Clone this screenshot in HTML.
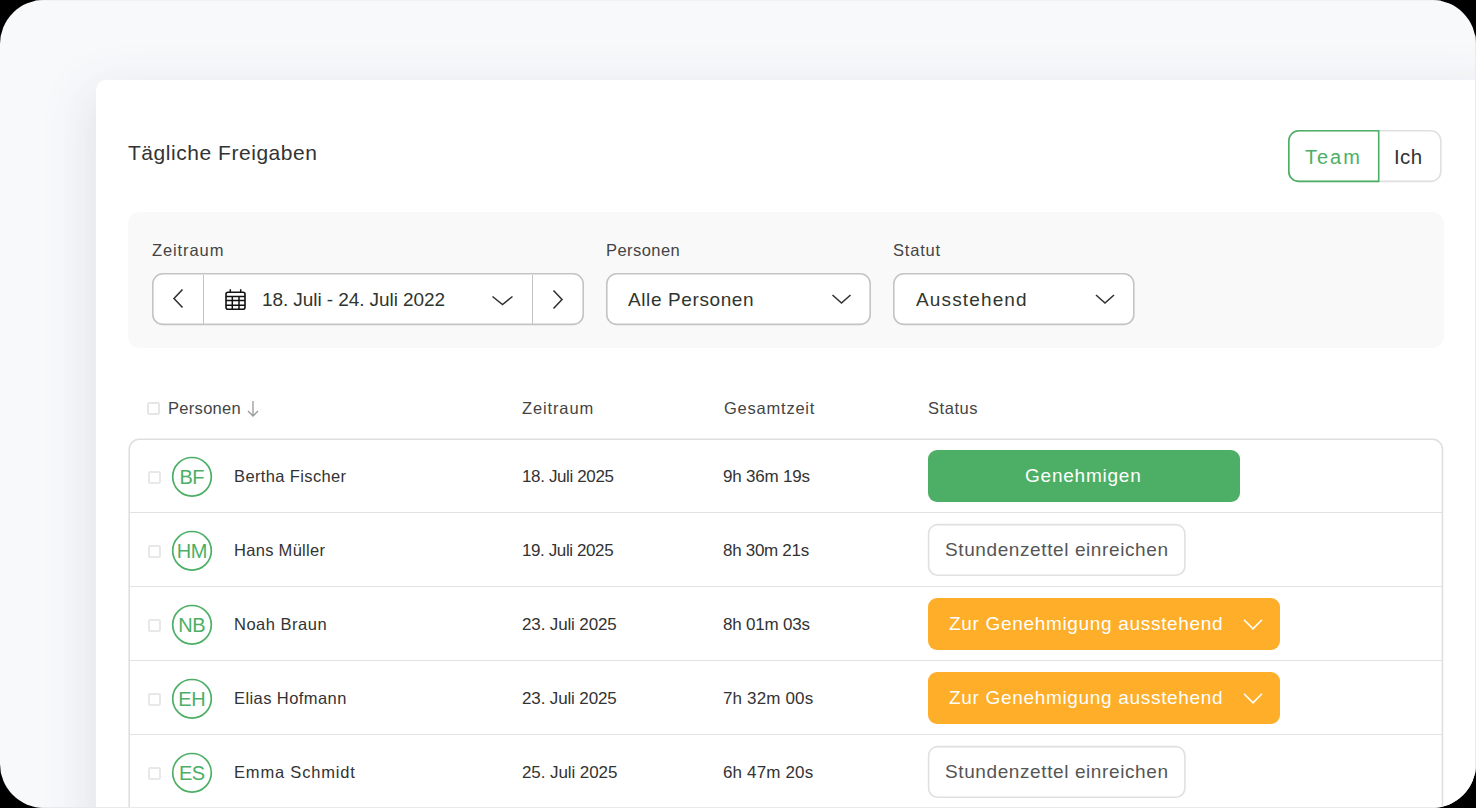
<!DOCTYPE html>
<html><head><meta charset="utf-8">
<style>
*{box-sizing:border-box;margin:0;padding:0}
html,body{width:1476px;height:808px;overflow:hidden;background:#000}
body{font-family:"Liberation Sans",sans-serif;position:relative}
.frame{position:absolute;left:0;top:0;width:1476px;height:808px;border-radius:44px;background:#f8f9fb;overflow:hidden}
.edge-t{position:absolute;left:0;top:0;width:1476px;height:1px;background:#f2f3f5}
.edge-r{position:absolute;right:0;top:0;width:1px;height:808px;background:#e9eaec}
.edge-b{position:absolute;left:0;bottom:0;width:1476px;height:1px;background:#e8e9eb}
.card{position:absolute;left:96px;top:80px;width:1420px;height:800px;background:#fff;border-radius:10px;box-shadow:-9px 8px 50px rgba(45,75,95,0.11)}
.t{position:absolute;white-space:nowrap;line-height:1}
.box{position:absolute}
svg{position:absolute;overflow:visible}
</style></head>
<body>
<div class="frame">
  <div class="card"></div>

  <!-- title -->
  <span class="t" style="left:128px;top:142.4px;font-size:21px;color:#333;letter-spacing:0.54px">Tägliche Freigaben</span>

  <!-- toggle -->
  <svg style="left:0;top:0" width="1" height="1">
    <rect x="1288.8" y="130.8" width="152" height="50.6" rx="10" fill="#fff" stroke="#e0e0e0" stroke-width="1.6"/>
    <path d="M1378.7 130.8 H1298.8 A10 10 0 0 0 1288.8 140.8 V171.4 A10 10 0 0 0 1298.8 181.4 H1378.7 Z" fill="none" stroke="#4caf65" stroke-width="1.6"/>
  </svg>
  <span class="t" style="left:1305px;top:147px;font-size:20px;color:#4caf65;letter-spacing:2px">Team</span>
  <span class="t" style="left:1394px;top:147px;font-size:20.5px;color:#333;letter-spacing:0.35px">Ich</span>

  <!-- filter panel -->
  <div class="box" style="left:128px;top:212px;width:1316px;height:136px;background:#f9f9f9;border-radius:12px"></div>
  <span class="t" style="left:152px;top:242px;font-size:16.5px;color:#444;letter-spacing:0.9px">Zeitraum</span>
  <span class="t" style="left:606px;top:242px;font-size:16.5px;color:#444;letter-spacing:0.45px">Personen</span>
  <span class="t" style="left:893px;top:242px;font-size:16.5px;color:#444;letter-spacing:0.8px">Statut</span>

  <!-- date control -->
  <svg style="left:0;top:0" width="1" height="1"><rect x="152.8" y="273.8" width="430.4" height="50.6" rx="10" fill="#fff" stroke="#c3c4c3" stroke-width="1.6"/></svg>
  <div class="box" style="left:202.7px;top:274.5px;width:1.6px;height:49.5px;background:#c3c4c3"></div>
  <div class="box" style="left:531.7px;top:274.5px;width:1.6px;height:49.5px;background:#c3c4c3"></div>
  <svg style="left:0;top:0" width="1" height="1"><path d="M182.5 289.5 L174 298.5 L182.5 307.5" fill="none" stroke="#333" stroke-width="1.6"/></svg>
  <svg style="left:0;top:0" width="1" height="1"><path d="M553.5 290.5 L562 299.5 L553.5 308.5" fill="none" stroke="#333" stroke-width="1.6"/></svg>
  <svg style="left:0;top:0" width="1" height="1"><path d="M492.5 296.5 L502.5 304.5 L512.5 296.5" fill="none" stroke="#333" stroke-width="1.6"/></svg>
  <!-- calendar icon -->
  <svg style="left:0;top:0" width="1" height="1">
    <rect x="226" y="292.3" width="19" height="17" rx="2" fill="none" stroke="#111" stroke-width="1.6"/>
    <path d="M226 296.5H245M226 300.6H245M226 305.2H245M232.3 296.5V309.3M239 296.5V309.3M230.3 289.3V292.5M240.7 289.3V292.5" stroke="#111" stroke-width="1.5" fill="none"/>
  </svg>
  <span class="t" style="left:262px;top:290px;font-size:19px;color:#2f352f;letter-spacing:-0.08px">18. Juli - 24. Juli 2022</span>

  <!-- personen dropdown -->
  <svg style="left:0;top:0" width="1" height="1"><rect x="606.8" y="273.8" width="263.4" height="50.6" rx="10" fill="#fff" stroke="#c3c4c3" stroke-width="1.6"/></svg>
  <span class="t" style="left:628px;top:290px;font-size:19px;color:#2f352f;letter-spacing:0.61px">Alle Personen</span>
  <svg style="left:0;top:0" width="1" height="1"><path d="M832.5 295 L841.5 303 L850.5 295" fill="none" stroke="#333" stroke-width="1.6"/></svg>

  <!-- statut dropdown -->
  <svg style="left:0;top:0" width="1" height="1"><rect x="893.8" y="273.8" width="240" height="50.6" rx="10" fill="#fff" stroke="#c3c4c3" stroke-width="1.6"/></svg>
  <span class="t" style="left:916px;top:290px;font-size:19px;color:#2f352f;letter-spacing:1.14px">Ausstehend</span>
  <svg style="left:0;top:0" width="1" height="1"><path d="M1096 295 L1105 303 L1114 295" fill="none" stroke="#333" stroke-width="1.6"/></svg>

  <!-- table header -->
  <div class="box" style="left:147px;top:402px;width:13px;height:13px;border:2px solid #e6e6e6;border-radius:2px"></div>
  <span class="t" style="left:168px;top:400px;font-size:16.5px;color:#444;letter-spacing:0.3px">Personen</span>
  <svg style="left:0;top:0" width="1" height="1"><path d="M253 401 V416 M248 411 L253 416 L258 411" fill="none" stroke="#9a9a9a" stroke-width="1.3"/></svg>
  <span class="t" style="left:522px;top:400px;font-size:16.5px;color:#444;letter-spacing:0.87px">Zeitraum</span>
  <span class="t" style="left:724px;top:400px;font-size:16.5px;color:#444;letter-spacing:0.77px">Gesamtzeit</span>
  <span class="t" style="left:928px;top:400px;font-size:16.5px;color:#444;letter-spacing:0.56px">Status</span>

  <!-- table -->
  <svg style="left:0;top:0" width="1" height="1"><rect x="129.2" y="439.3" width="1313.3" height="420" rx="10" fill="none" stroke="#dfdfdf" stroke-width="1.6"/></svg>
  <!--ROWS-->
<div class="box" style="left:148px;top:470.5px;width:13px;height:13px;border:2px solid #e8e8e8;border-radius:2px"></div>
<svg style="left:0;top:0" width="1" height="1"><circle cx="192" cy="476.8" r="19.3" fill="none" stroke="#4caf65" stroke-width="1.7"/></svg>
<span class="t" style="left:172px;width:40px;text-align:center;top:466.56px;font-size:20px;color:#4caf65;letter-spacing:-0.5px;text-indent:-0.5px">BF</span>
<span class="t" style="left:234px;top:468.02px;font-size:16.5px;color:#333;letter-spacing:0.37px">Bertha Fischer</span>
<span class="t" style="left:522px;top:467.8px;font-size:17px;color:#333;letter-spacing:-0.37px">18. Juli 2025</span>
<span class="t" style="left:723px;top:467.8px;font-size:17px;color:#333;letter-spacing:-0.2px">9h 36m 19s</span>
<div class="box" style="left:928px;top:450px;width:312px;height:51.5px;background:#4caf65;border-radius:9px"></div>
<span class="t" style="left:1025px;top:465.91px;font-size:19px;color:#fff;letter-spacing:0.77px">Genehmigen</span>
<div class="box" style="left:130px;top:511.6px;width:1312px;height:1.75px;background:#e2e2e2"></div>
<div class="box" style="left:148px;top:544.5px;width:13px;height:13px;border:2px solid #e8e8e8;border-radius:2px"></div>
<svg style="left:0;top:0" width="1" height="1"><circle cx="192" cy="550.8" r="19.3" fill="none" stroke="#4caf65" stroke-width="1.7"/></svg>
<span class="t" style="left:172px;width:40px;text-align:center;top:540.56px;font-size:20px;color:#4caf65;letter-spacing:-0.5px;text-indent:-0.5px">HM</span>
<span class="t" style="left:234px;top:542.02px;font-size:16.5px;color:#333;letter-spacing:0.3px">Hans Müller</span>
<span class="t" style="left:522px;top:541.8px;font-size:17px;color:#333;letter-spacing:-0.4px">19. Juli 2025</span>
<span class="t" style="left:723px;top:541.8px;font-size:17px;color:#333;letter-spacing:-0.3px">8h 30m 21s</span>
<svg style="left:0;top:0" width="1" height="1"><rect x="928.6" y="524.6" width="256.3" height="50.6" rx="9" fill="#fff" stroke="#e0e0e0" stroke-width="1.6"/></svg>
<span class="t" style="left:945px;top:540.11px;font-size:19px;color:#555;letter-spacing:0.6px">Stundenzettel einreichen</span>
<div class="box" style="left:130px;top:585.6px;width:1312px;height:1.75px;background:#e2e2e2"></div>
<div class="box" style="left:148px;top:618.5px;width:13px;height:13px;border:2px solid #e8e8e8;border-radius:2px"></div>
<svg style="left:0;top:0" width="1" height="1"><circle cx="192" cy="624.8" r="19.3" fill="none" stroke="#4caf65" stroke-width="1.7"/></svg>
<span class="t" style="left:172px;width:40px;text-align:center;top:614.56px;font-size:20px;color:#4caf65;letter-spacing:-0.5px;text-indent:-0.5px">NB</span>
<span class="t" style="left:234px;top:616.02px;font-size:16.5px;color:#333;letter-spacing:0.5px">Noah Braun</span>
<span class="t" style="left:522px;top:615.8px;font-size:17px;color:#333;letter-spacing:-0.14px">23. Juli 2025</span>
<span class="t" style="left:723px;top:615.8px;font-size:17px;color:#333;letter-spacing:-0.2px">8h 01m 03s</span>
<div class="box" style="left:928px;top:598px;width:352px;height:51.5px;background:#feae29;border-radius:9px"></div>
<span class="t" style="left:949px;top:614.01px;font-size:19px;color:#fff;letter-spacing:0.68px">Zur Genehmigung ausstehend</span>
<svg style="left:0;top:0" width="1" height="1"><path d="M1244 619.8 L1253 628.8 L1262 619.8" fill="none" stroke="#fff" stroke-width="1.6"/></svg>
<div class="box" style="left:130px;top:659.6px;width:1312px;height:1.75px;background:#e2e2e2"></div>
<div class="box" style="left:148px;top:692.5px;width:13px;height:13px;border:2px solid #e8e8e8;border-radius:2px"></div>
<svg style="left:0;top:0" width="1" height="1"><circle cx="192" cy="698.8" r="19.3" fill="none" stroke="#4caf65" stroke-width="1.7"/></svg>
<span class="t" style="left:172px;width:40px;text-align:center;top:688.56px;font-size:20px;color:#4caf65;letter-spacing:-0.5px;text-indent:-0.5px">EH</span>
<span class="t" style="left:234px;top:690.02px;font-size:16.5px;color:#333;letter-spacing:0.42px">Elias Hofmann</span>
<span class="t" style="left:522px;top:689.8px;font-size:17px;color:#333;letter-spacing:-0.14px">23. Juli 2025</span>
<span class="t" style="left:723px;top:689.8px;font-size:17px;color:#333;letter-spacing:0.15px">7h 32m 00s</span>
<div class="box" style="left:928px;top:672px;width:352px;height:51.5px;background:#feae29;border-radius:9px"></div>
<span class="t" style="left:949px;top:688.01px;font-size:19px;color:#fff;letter-spacing:0.68px">Zur Genehmigung ausstehend</span>
<svg style="left:0;top:0" width="1" height="1"><path d="M1244 693.8 L1253 702.8 L1262 693.8" fill="none" stroke="#fff" stroke-width="1.6"/></svg>
<div class="box" style="left:130px;top:733.6px;width:1312px;height:1.75px;background:#e2e2e2"></div>
<div class="box" style="left:148px;top:766.5px;width:13px;height:13px;border:2px solid #e8e8e8;border-radius:2px"></div>
<svg style="left:0;top:0" width="1" height="1"><circle cx="192" cy="772.8" r="19.3" fill="none" stroke="#4caf65" stroke-width="1.7"/></svg>
<span class="t" style="left:172px;width:40px;text-align:center;top:762.56px;font-size:20px;color:#4caf65;letter-spacing:-0.5px;text-indent:-0.5px">ES</span>
<span class="t" style="left:234px;top:764.02px;font-size:16.5px;color:#333;letter-spacing:0.82px">Emma Schmidt</span>
<span class="t" style="left:522px;top:763.8px;font-size:17px;color:#333;letter-spacing:-0.08px">25. Juli 2025</span>
<span class="t" style="left:723px;top:763.8px;font-size:17px;color:#333;letter-spacing:0.15px">6h 47m 20s</span>
<svg style="left:0;top:0" width="1" height="1"><rect x="928.6" y="746.6" width="256.3" height="50.6" rx="9" fill="#fff" stroke="#e0e0e0" stroke-width="1.6"/></svg>
<span class="t" style="left:945px;top:762.11px;font-size:19px;color:#555;letter-spacing:0.6px">Stundenzettel einreichen</span>
<!--/ROWS-->
<div class="edge-t"></div><div class="edge-r"></div><div class="edge-b"></div>
</div>
</body></html>
